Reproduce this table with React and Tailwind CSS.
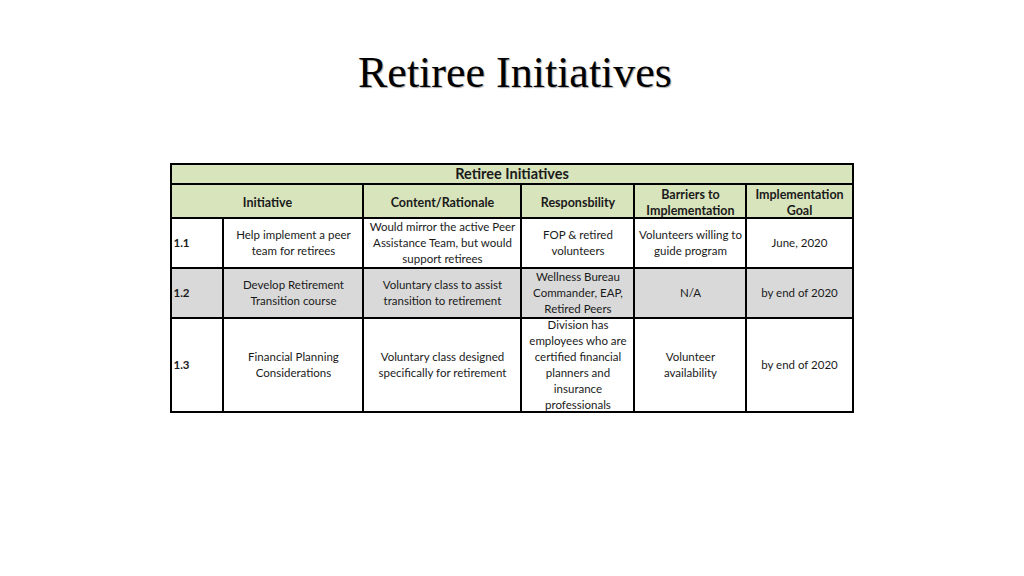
import React from "react";

const rows = [
  {
    n: "1.1",
    bg: "bg-white",
    h: "h-[47px]",
    c: [
      ["Help implement a peer", "team for retirees"],
      ["Would mirror the active Peer", "Assistance Team, but would", "support retirees"],
      ["FOP & retired", "volunteers"],
      ["Volunteers willing to", "guide program"],
      ["June, 2020"],
    ],
  },
  {
    n: "1.2",
    bg: "bg-[#d9d9d9]",
    h: "h-[48px]",
    c: [
      ["Develop Retirement", "Transition course"],
      ["Voluntary class to assist", "transition to retirement"],
      ["Wellness Bureau", "Commander, EAP,", "Retired Peers"],
      ["N/A"],
      ["by end of 2020"],
    ],
  },
  {
    n: "1.3",
    bg: "bg-white",
    h: "h-[94px]",
    c: [
      ["Financial Planning", "Considerations"],
      ["Voluntary class designed", "specifically for retirement"],
      ["Division has", "employees who are", "certified financial", "planners and", "insurance", "professionals"],
      ["Volunteer", "availability"],
      ["by end of 2020"],
    ],
  },
];

const cell = "border-2 border-black text-center align-middle leading-[16px] whitespace-nowrap";

function H({ children }) {
  return <div className="mt-[2px] -mb-[2px]">{children}</div>;
}

export default function App() {
  return (
    <div className="w-[1024px] h-[576px] bg-white flex flex-col items-center" style={{ fontFamily: "Lato, 'Open Sans', sans-serif" }}>
      <h1 className="mt-[47px] ml-[6px] text-[44px] leading-[52px] text-black" style={{ fontFamily: "'Liberation Serif', serif", textShadow: "1px 1px 1px rgba(0,0,0,0.35)" }}>
        Retiree Initiatives
      </h1>
      <table className="mt-[64px] border-collapse table-fixed w-[681px] text-[11.5px] text-[#1a1a1a]">
        <colgroup>
          <col className="w-[52px]" />
          <col className="w-[140px]" />
          <col className="w-[158px]" />
          <col className="w-[113px]" />
          <col className="w-[112px]" />
          <col className="w-[106px]" />
        </colgroup>
        <tbody>
          <tr className="h-[20px] bg-[#d8e4bc]">
            <td colSpan={6} className={`${cell} font-bold text-[14.5px] leading-[18px]`}>Retiree Initiatives</td>
          </tr>
          <tr className="h-[34px] bg-[#d8e4bc] font-bold text-[12.5px]">
            <td colSpan={2} className={cell}><H>Initiative</H></td>
            <td className={cell}><H>Content/Rationale</H></td>
            <td className={cell}><H>Responsbility</H></td>
            <td className={cell}><H>Barriers to<br />Implementation</H></td>
            <td className={cell}><H>Implementation<br />Goal</H></td>
          </tr>
          {rows.map((r) => (
            <tr key={r.n} className={`${r.h} ${r.bg}`}>
              <td className="border-2 border-black align-middle text-left font-bold pl-[1px]">{r.n}</td>
              {r.c.map((t, i) => (
                <td key={i} className={cell}>
                  {t.length > 3 ? (
                    <div className="h-[90px] -my-[3px] flex flex-col items-center justify-center">
                      {t.map((l, j) => (
                        <div key={j}>{l}</div>
                      ))}
                    </div>
                  ) : (
                    t.map((l, j) => <div key={j}>{l}</div>)
                  )}
                </td>
              ))}
            </tr>
          ))}
        </tbody>
      </table>
    </div>
  );
}
